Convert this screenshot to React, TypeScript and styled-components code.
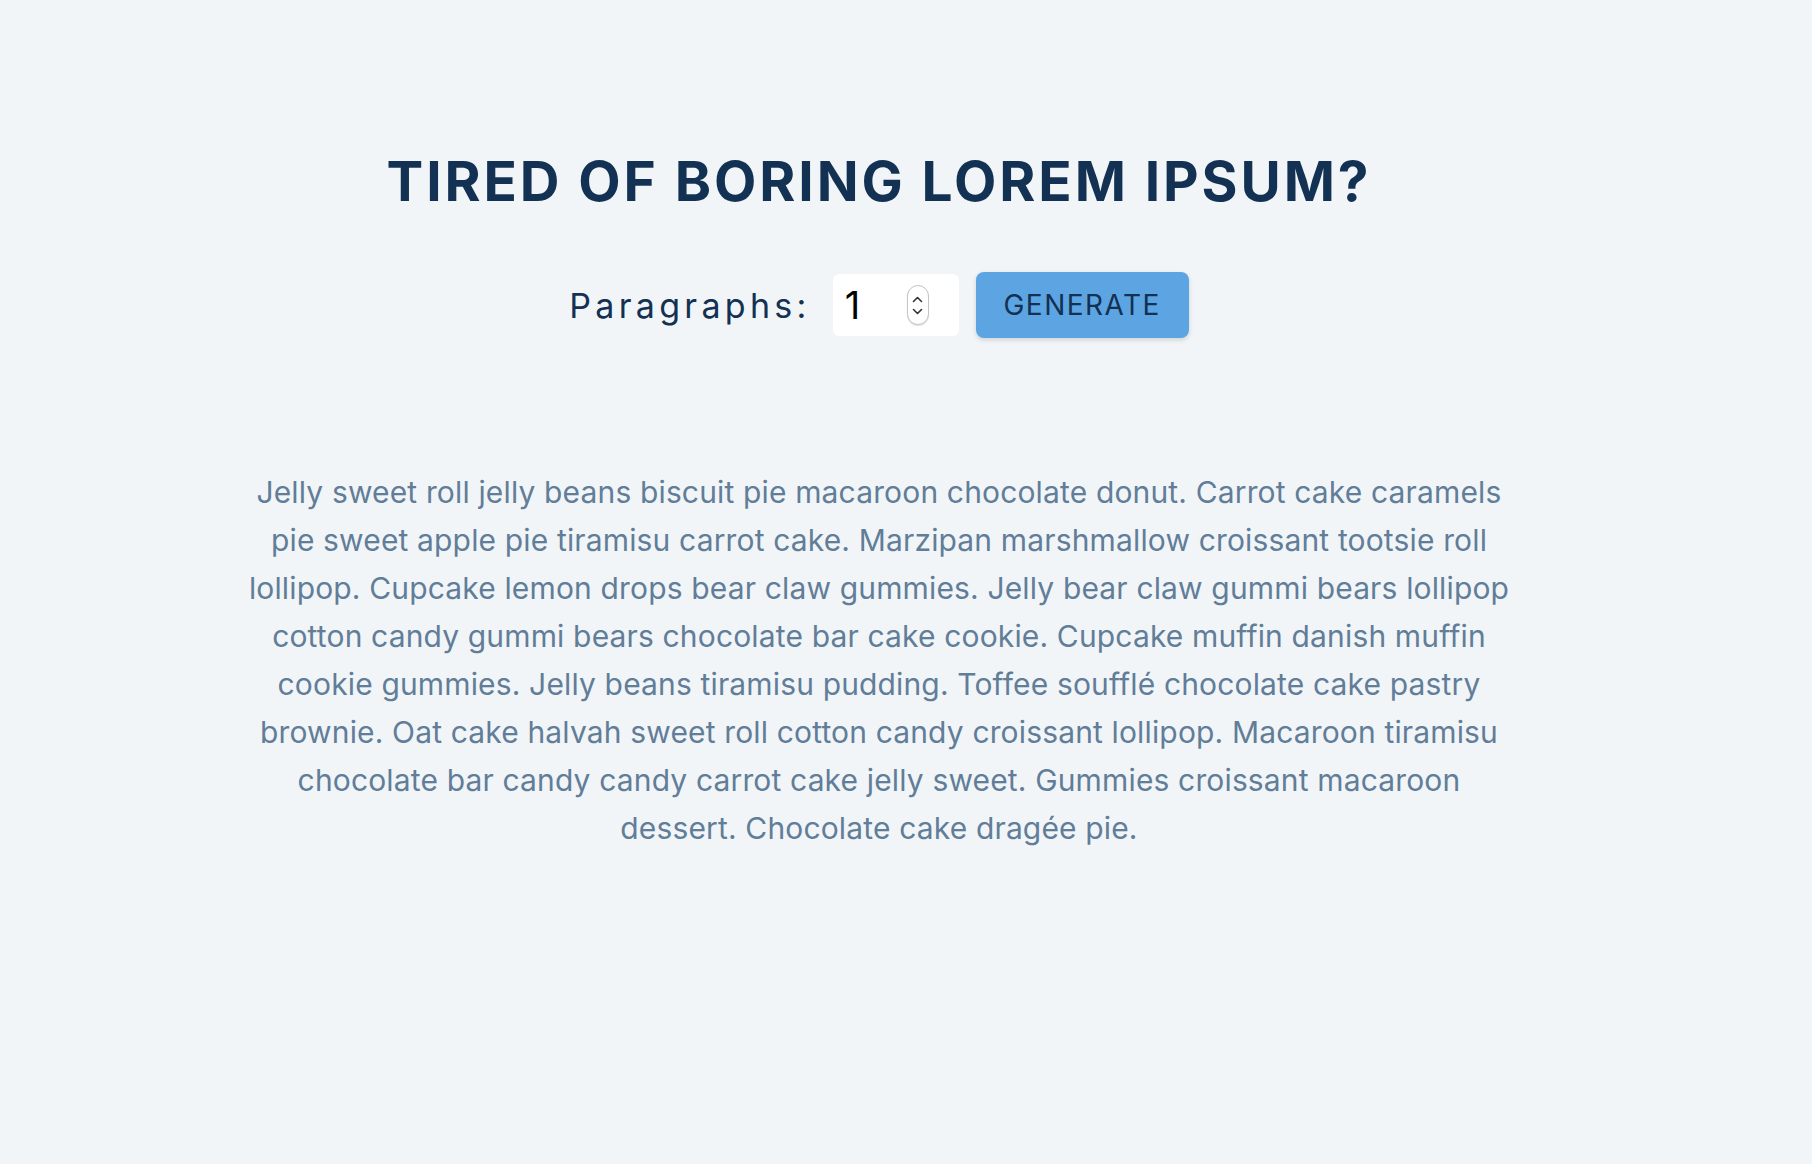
import React, { useState } from "react";
import styled, { createGlobalStyle } from "styled-components";

const GlobalStyle = createGlobalStyle`
  * { box-sizing: border-box; }
  html, body { margin: 0; padding: 0; }
  body {
    background: #f1f5f8;
    font-family: Inter, "Noto Sans", sans-serif;
    color: #102a43;
    min-height: 100vh;
  }
`;

const Page = styled.main`
  display: flex;
  flex-direction: column;
  align-items: center;
  padding: 154px 54px 0 0;
  min-height: 1164px;
`;

const Title = styled.h1`
  margin: 0;
  font-size: 55px;
  line-height: 1;
  font-weight: 700;
  letter-spacing: 2.9px;
  text-transform: uppercase;
  color: #133152;
`;

const Form = styled.form`
  display: flex;
  align-items: center;
  margin-top: 63px;
`;

const Label = styled.label`
  font-size: 34px;
  letter-spacing: 4.3px;
  color: #133152;
  margin-right: 22px;
`;

const InputBox = styled.div`
  display: flex;
  align-items: center;
  width: 126px;
  height: 62px;
  background: #fff;
  border-radius: 6px;
  padding: 0 30px 0 12px;
`;

const NumberInput = styled.input`
  flex: 1;
  min-width: 0;
  border: none;
  outline: none;
  background: transparent;
  font-family: Inter, "Noto Sans", sans-serif;
  font-size: 38px;
  color: #000;
  padding: 0;
  -moz-appearance: textfield;
  &::-webkit-inner-spin-button,
  &::-webkit-outer-spin-button {
    -webkit-appearance: none;
    margin: 0;
  }
`;

const Spinner = styled.div`
  width: 22px;
  height: 40px;
  border: 1px solid #c4c4c4;
  border-radius: 11px;
  background: #fff;
  box-shadow: 0 1px 1px rgba(0, 0, 0, 0.12);
  display: flex;
  flex-direction: column;
  align-items: center;
  justify-content: center;
  gap: 5px;
  flex-shrink: 0;
`;

const Button = styled.button`
  margin-left: 17px;
  width: 213px;
  height: 66px;
  border: none;
  border-radius: 8px;
  background: #5da4e2;
  box-shadow: 0 2px 5px rgba(0, 0, 0, 0.14);
  color: #133152;
  font-family: Inter, "Noto Sans", sans-serif;
  font-size: 28px;
  letter-spacing: 1.5px;
  text-transform: uppercase;
  cursor: pointer;
`;

const Result = styled.article`
  margin-top: 130px;
  width: 1275px;
`;

const Paragraph = styled.p`
  margin: 0;
  font-size: 30px;
  line-height: 48px;
  letter-spacing: 0.15px;
  color: #617d98;
  text-align: center;
`;

const Chevron = ({ up }: { up?: boolean }) => (
  <svg width="11" height="7" viewBox="0 0 11 7">
    <path
      d={up ? "M1.5 5.5 L5.5 1.5 L9.5 5.5" : "M1.5 1.5 L5.5 5.5 L9.5 1.5"}
      fill="none"
      stroke="#333"
      strokeWidth="1.6"
      strokeLinecap="round"
      strokeLinejoin="round"
    />
  </svg>
);

const text =
  "Jelly sweet roll jelly beans biscuit pie macaroon chocolate donut. Carrot cake caramels pie sweet apple pie tiramisu carrot cake. Marzipan marshmallow croissant tootsie roll lollipop. Cupcake lemon drops bear claw gummies. Jelly bear claw gummi bears lollipop cotton candy gummi bears chocolate bar cake cookie. Cupcake muffin danish muffin cookie gummies. Jelly beans tiramisu pudding. Toffee soufflé chocolate cake pastry brownie. Oat cake halvah sweet roll cotton candy croissant lollipop. Macaroon tiramisu chocolate bar candy candy carrot cake jelly sweet. Gummies croissant macaroon dessert. Chocolate cake dragée pie.";

export default function App() {
  const [count, setCount] = useState(1);
  return (
    <>
      <GlobalStyle />
      <Page>
        <Title>Tired of boring lorem ipsum?</Title>
        <Form onSubmit={(e) => e.preventDefault()}>
          <Label htmlFor="amount">Paragraphs:</Label>
          <InputBox>
            <NumberInput
              id="amount"
              type="number"
              value={count}
              onChange={(e) => setCount(Number(e.target.value))}
            />
            <Spinner>
              <Chevron up />
              <Chevron />
            </Spinner>
          </InputBox>
          <Button type="submit">Generate</Button>
        </Form>
        <Result>
          <Paragraph>{text}</Paragraph>
        </Result>
      </Page>
    </>
  );
}
